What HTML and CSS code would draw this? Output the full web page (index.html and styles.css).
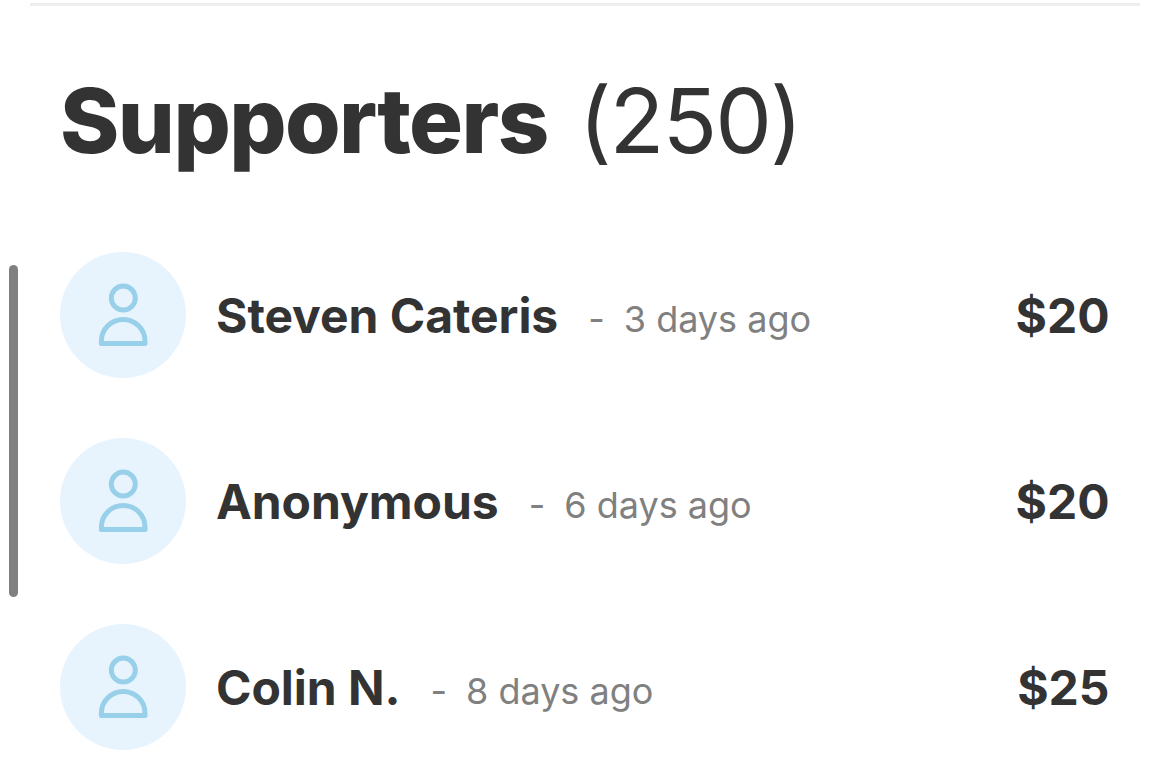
FILE: index.html
```html
<!DOCTYPE html>
<html lang="en">
<head>
    <meta charset="UTF-8">
    <meta name="viewport" content="width=device-width, initial-scale=1.0">
    <title>Supporters</title>
    <link rel="stylesheet" href="styles.css">
</head>
<body>
    <div class="scrollbar"></div>
    <svg class="symbols" width="0" height="0">
        <symbol id="person" viewBox="0 0 126 126">
            <circle cx="63.3" cy="46.1" r="12"/>
            <path d="M41.4 91.6h43.6v-2.6c0-12-9.8-21.6-21.8-21.6s-21.8 9.6-21.8 21.6z"/>
        </symbol>
    </svg>
    <div class="container">
        <h1>Supporters <span class="count">(250)</span></h1>
        <ul class="supporters">
            <li class="supporter">
                <div class="avatar"><svg><use href="#person"/></svg></div>
                <span class="name">Steven Cateris</span>
                <span class="dash">-</span>
                <span class="time">3 days ago</span>
                <span class="amount">$20</span>
            </li>
            <li class="supporter">
                <div class="avatar"><svg><use href="#person"/></svg></div>
                <span class="name">Anonymous</span>
                <span class="dash">-</span>
                <span class="time">6 days ago</span>
                <span class="amount">$20</span>
            </li>
            <li class="supporter">
                <div class="avatar"><svg><use href="#person"/></svg></div>
                <span class="name">Colin N.</span>
                <span class="dash">-</span>
                <span class="time">8 days ago</span>
                <span class="amount">$25</span>
            </li>
        </ul>
    </div>
</body>
</html>
```
FILE: styles.css
```css
body {
    font-family: Inter, sans-serif;
    background-color: #ffffff;
    color: #333333;
    margin: 0;
    overflow: hidden;
}
.symbols {
    position: absolute;
}
.scrollbar {
    position: absolute;
    left: 9px;
    top: 265px;
    width: 9px;
    height: 332px;
    border-radius: 5px;
    background-color: #808080;
}
.container {
    margin: 3px 30px 0;
    padding: 0 30px;
    border-top: 3px solid #eeeeee;
}
h1 {
    display: flex;
    align-items: baseline;
    gap: 31px;
    margin: 60px 0 0;
    height: 186px;
    font-size: 90px;
    line-height: 110px;
    font-weight: 800;
    letter-spacing: -1.6px;
}
.count {
    font-weight: 400;
    letter-spacing: -2px;
}
.supporters {
    display: flex;
    flex-direction: column;
    gap: 60px;
    margin: 0;
    padding: 0;
    list-style: none;
}
.supporter {
    display: flex;
    align-items: center;
}
.avatar {
    width: 126px;
    height: 126px;
    margin-right: 30px;
    border-radius: 50%;
    background-color: #e8f4fd;
}
.avatar svg {
    display: block;
    width: 126px;
    height: 126px;
    fill: none;
    stroke: #98d0ea;
    stroke-width: 5;
    stroke-linejoin: round;
}
.name {
    font-size: 48px;
    font-weight: 700;
    letter-spacing: -0.05px;
}
.dash,
.time {
    padding-top: 8px;
    font-size: 36px;
    color: #808080;
}
.dash {
    margin: 0 19px 0 30px;
}
.amount {
    margin-left: auto;
    margin-right: 0.5px;
    font-size: 48px;
    font-weight: 700;
}
```
